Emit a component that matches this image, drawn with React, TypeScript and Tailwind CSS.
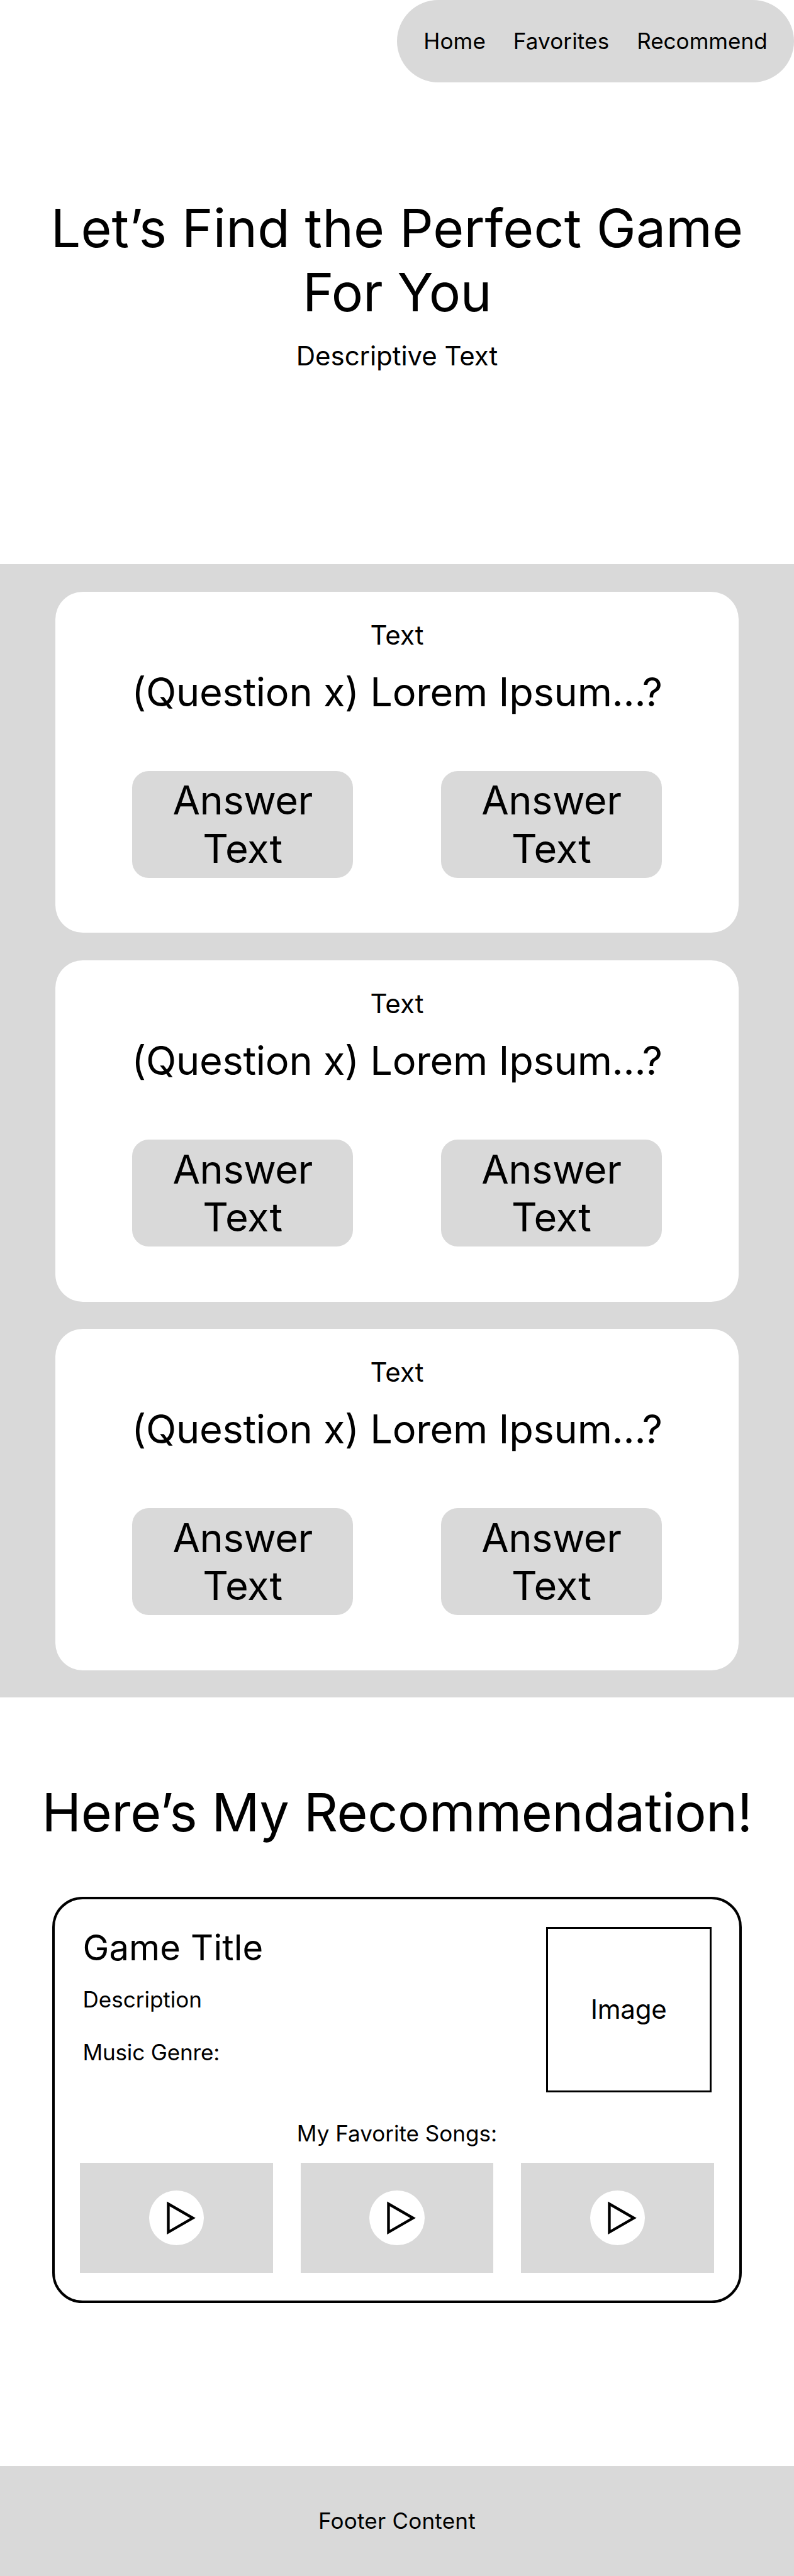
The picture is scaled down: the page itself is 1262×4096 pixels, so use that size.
function Question() {
  return (
    <article className="flex h-[542.4px] w-[1086.7px] flex-col items-center rounded-[43.8px] bg-white pt-[43.8px]">
      <p className="text-[42.06px] leading-[50.8px]">Text</p>
      <h2 className="mt-[26.3px] whitespace-nowrap text-[63.1px] leading-[76.2px] tracking-[-0.28px]">
        (Question x) Lorem Ipsum...?
      </h2>
      <div className="mt-[87.6px] flex gap-[140.2px]">
        <Answer />
        <Answer />
      </div>
    </article>
  );
}

function Answer() {
  return (
    <button className="flex h-[170px] w-[350.5px] flex-col items-center rounded-[26.3px] bg-[#d9d9d9] pt-[8.8px] text-[63.1px] leading-[76.2px]">
      <span className="tracking-[-0.5px]">Answer</span>
      <span className="tracking-[-0.2px]">Text</span>
    </button>
  );
}

function Song() {
  return (
    <div className="flex h-[175.2px] w-[306.7px] items-center justify-center bg-[#d9d9d9]">
      <div className="size-[87.6px] rounded-full bg-white">
        <svg viewBox="0 0 100 100" className="size-full" fill="none" stroke="black" strokeWidth="5">
          <path d="M34.8 24.3 L34.8 75.7 L79.3 50 Z" />
        </svg>
      </div>
    </div>
  );
}

export default function App() {
  return (
    <div className="flex min-h-[4096px] w-[1262px] flex-col bg-white font-['Inter',sans-serif] text-black">
      <header className="flex justify-end">
        <nav className="flex h-[131.4px] w-[631px] items-center justify-center gap-[43.8px] rounded-[65.7px] bg-[#d9d9d9] text-[35.05px] leading-[42.4px]">
          <a className="tracking-[0.1px]">Home</a>
          <a className="tracking-[0.14px]">Favorites</a>
          <a>Recommend</a>
        </nav>
      </header>

      <section className="flex h-[765.8px] flex-col items-center pt-[180.5px] text-center">
        <h1 className="whitespace-nowrap text-[84.13px] leading-[101.7px]">
          <span className="tracking-[0.11px]">Let’s Find the Perfect Game</span>
          <br />
          <span className="tracking-[-0.4px]">For You</span>
        </h1>
        <p className="mt-[25.4px] text-[42.06px] leading-[50.8px] tracking-[-0.08px]">Descriptive Text</p>
      </section>

      <section className="flex h-[1802.3px] flex-col items-center gap-[43.8px] bg-[#d9d9d9] pt-[43.8px]">
        <Question />
        <Question />
        <Question />
      </section>

      <section className="flex h-[1221.3px] flex-col items-center pt-[131.4px]">
        <h2 className="whitespace-nowrap text-[84.13px] leading-[101.7px] tracking-[-0.33px]">Here’s My Recommendation!</h2>
        <div className="mt-[83.2px] h-[646.6px] w-[1095.5px] rounded-[48.2px] border-4 border-black px-[39.8px] pt-[44.2px]">
          <div className="flex justify-between px-[4.4px]">
            <div>
              <h3 className="text-[56.08px] leading-[67.9px] tracking-[0.15px]">Game Title</h3>
              <p className="mt-[25.8px] text-[35.05px] leading-[42.4px]">Description</p>
              <p className="mt-[41.8px] text-[35.05px] leading-[42.4px] tracking-[-0.15px]">Music Genre:</p>
            </div>
            <div className="flex size-[262.9px] items-center justify-center border-3 border-black text-[42.06px] leading-[50.8px] tracking-[-0.25px]">
              Image
            </div>
          </div>
          <p className="mt-[43.8px] text-center text-[35.05px] leading-[42.4px]">My Favorite Songs:</p>
          <div className="mt-[25.8px] flex justify-between">
            <Song />
            <Song />
            <Song />
          </div>
        </div>
      </section>

      <footer className="flex h-[175.2px] items-center justify-center bg-[#d9d9d9] text-[35.05px] leading-[42.4px] tracking-[0.2px]">
        Footer Content
      </footer>
    </div>
  );
}
